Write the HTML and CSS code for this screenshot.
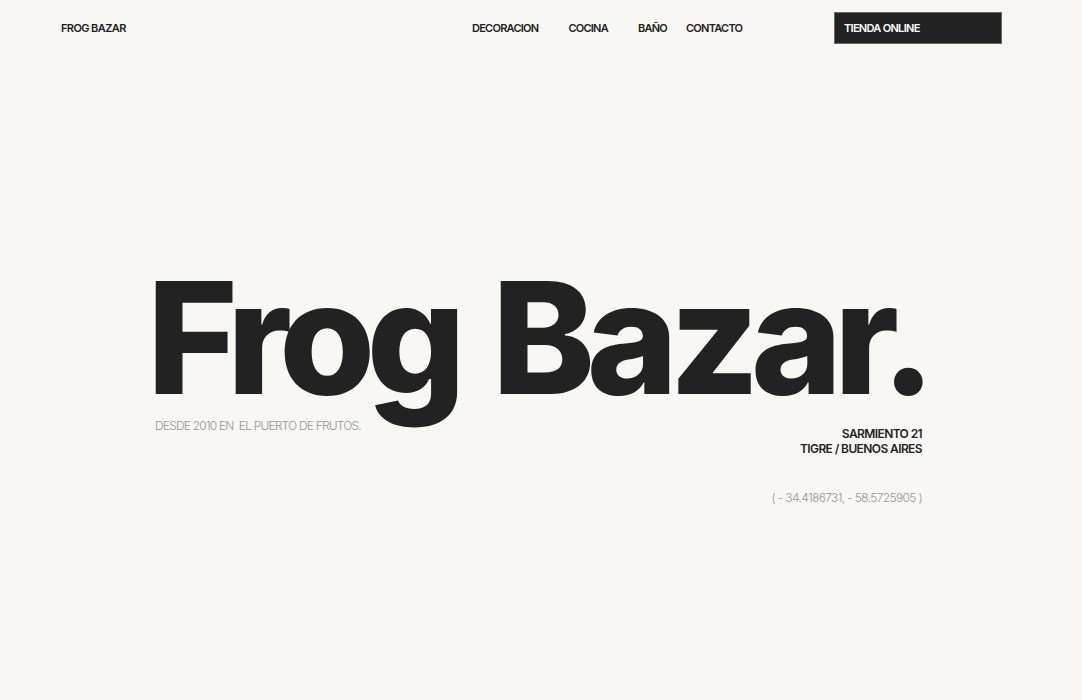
FILE: index.html
```html
<!DOCTYPE html>
<html lang="es">
<head>
<meta charset="utf-8">
<title>Frog Bazar</title>
<link rel="stylesheet" href="styles.css">
</head>
<body>
<header class="header">
  <div class="logo">FROG BAZAR</div>
  <nav class="nav">
    <a class="nav-link nav-deco" href="#">DECORACION</a>
    <a class="nav-link nav-cocina" href="#">COCINA</a>
    <a class="nav-link nav-bano" href="#">BAÑO</a>
    <a class="nav-link" href="#">CONTACTO</a>
  </nav>
  <a class="shop-btn" href="#">TIENDA ONLINE</a>
</header>
<main class="hero">
  <div class="hero-inner">
    <h1 class="title">Frog Bazar.</h1>
    <div class="info">
      <p class="since">DESDE 2010 EN&nbsp; EL PUERTO DE FRUTOS.</p>
      <div class="address">
        <p class="addr-line">SARMIENTO 21</p>
        <p class="addr-line">TIGRE / BUENOS AIRES</p>
        <p class="coords">( - 34.4186731, - 58.5725905 )</p>
      </div>
    </div>
  </div>
</main>
</body>
</html>
```

FILE: styles.css
```css
* { box-sizing: border-box; }
html, body { margin: 0; padding: 0; }
body {
  background: #f9f7f3;
  color: #222222;
  font-family: Inter, "Liberation Sans", sans-serif;
  width: 1082px;
  height: 700px;
  overflow: hidden;
}
.header {
  display: flex;
  align-items: center;
  padding: 12px 80px 0 61px;
  height: 44px;
}
.logo {
  width: 411px;
  font-size: 11px;
  font-weight: 600;
  letter-spacing: -0.6px;
}
.nav {
  display: flex;
  align-items: center;
}
.nav-link {
  font-size: 11px;
  font-weight: 600;
  letter-spacing: -0.75px;
  color: #222222;
  text-decoration: none;
}
.nav-deco { margin-right: 30px; }
.nav-cocina { margin-right: 30px; }
.nav-bano { margin-right: 19px; }
.shop-btn {
  margin-left: auto;
  width: 168px;
  height: 32px;
  background: #222222;
  border: 1px solid #6b6864;
  color: #ffffff;
  font-size: 11px;
  font-weight: 600;
  letter-spacing: -0.7px;
  text-decoration: none;
  display: flex;
  align-items: center;
  padding-left: 9px;
}
.hero {
  display: flex;
  justify-content: center;
  padding-top: 216px;
  padding-right: 13px;
}
.hero-inner {
  width: 775px;
}
.title {
  margin: 0;
  font-size: 155px;
  font-weight: 800;
  letter-spacing: -8.4px;
  word-spacing: 9px;
  line-height: 1;
  white-space: nowrap;
}
.info {
  display: flex;
  justify-content: space-between;
  align-items: flex-start;
  margin-top: 3px;
}
.since {
  margin: 0 0 0 8px;
  font-size: 12px;
  font-weight: 300;
  letter-spacing: -0.8px;
  color: #999590;
}
.address {
  text-align: right;
  padding-top: 8px;
}
.addr-line {
  margin: 0;
  font-size: 12px;
  font-weight: 600;
  letter-spacing: -0.6px;
  line-height: 15px;
}
.coords {
  margin: 34px 0 0 0;
  font-size: 12px;
  font-weight: 300;
  letter-spacing: -0.65px;
  color: #999590;
}
```
